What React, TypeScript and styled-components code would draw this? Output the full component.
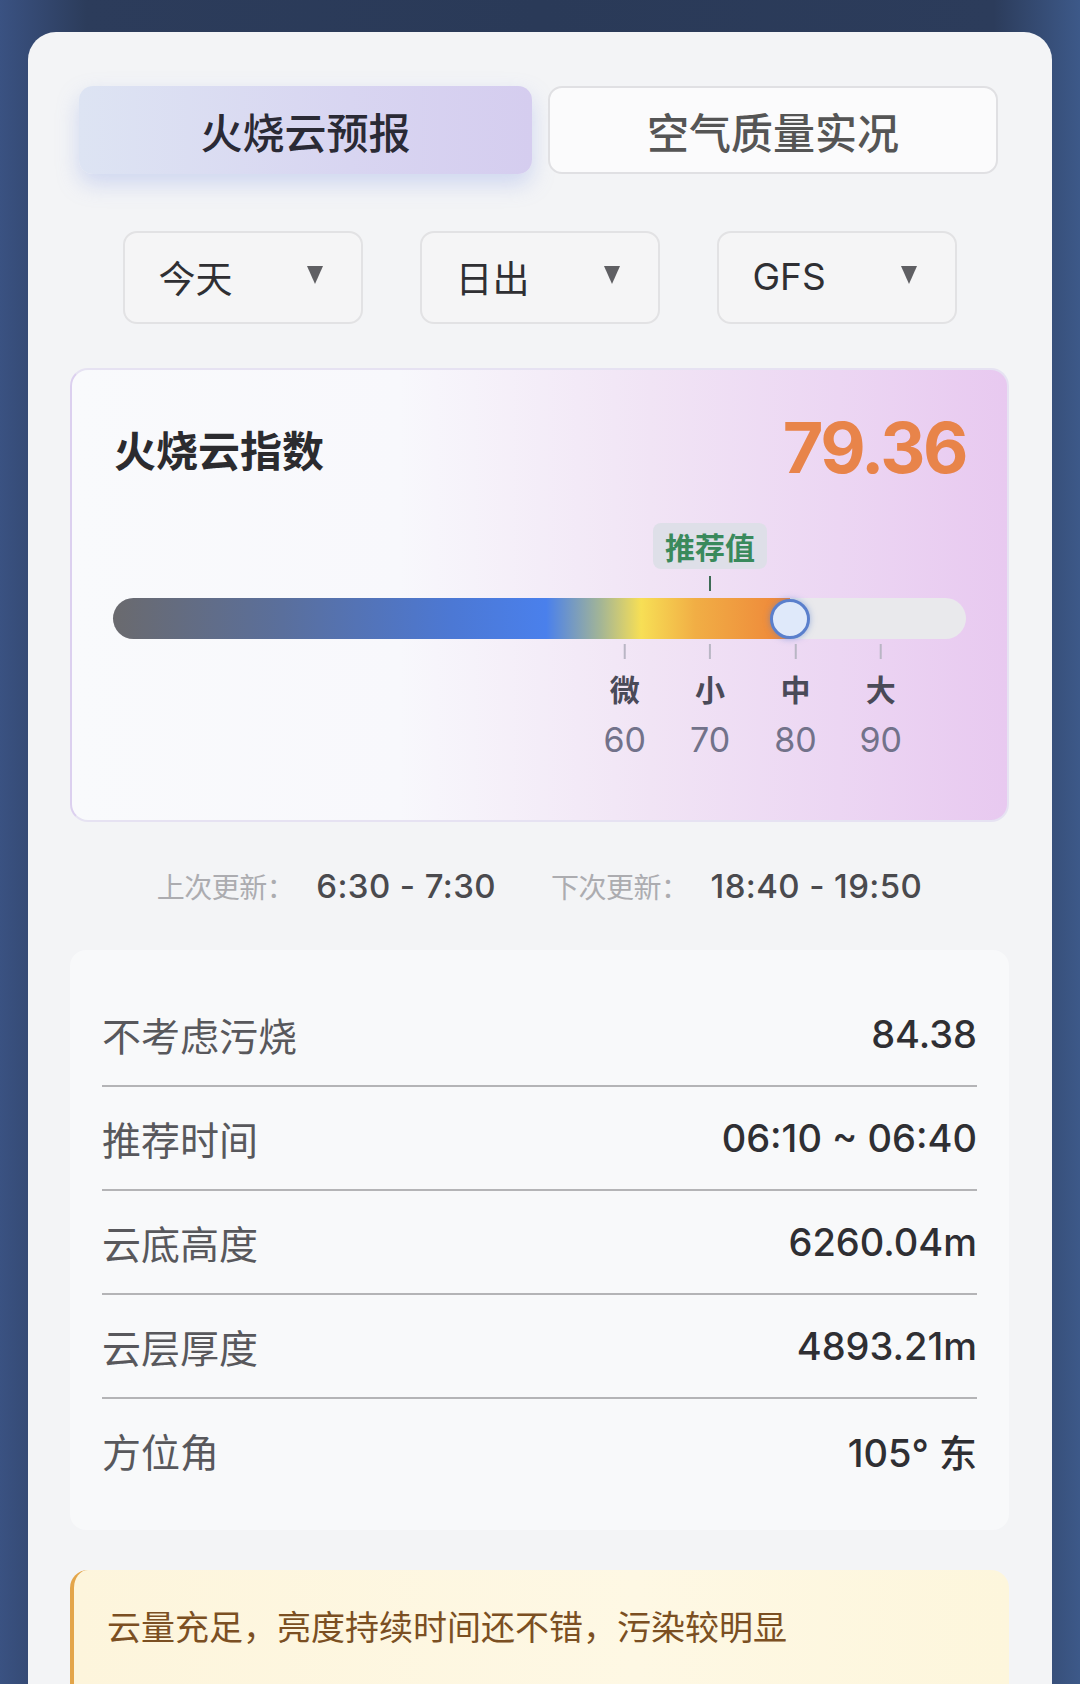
import React from "react";
import styled, { createGlobalStyle } from "styled-components";

const Global = createGlobalStyle`
  html, body { margin: 0; padding: 0; }
  body {
    font-family: "Inter", "Noto Sans CJK SC", "Noto Sans", sans-serif;
    background: #2c3d5c;
  }
`;

const Page = styled.div`
  min-height: 1684px;
  padding: 32px 28px 0;
  box-sizing: border-box;
  background: linear-gradient(90deg, #3a5282 0%, #2c3c5b 8%, #2a3a58 50%, #2c3c5b 92%, #3d5989 100%);
  overflow: hidden;
`;

const Card = styled.div`
  background: #f3f4f6;
  border-radius: 28px 28px 0 0;
  min-height: 1652px;
  padding: 54px 43px 0 42px;
  box-sizing: border-box;
`;

const Tabs = styled.div`
  display: grid;
  grid-template-columns: 453px 450px;
  gap: 16px;
  margin: 0 11px 0 9px;
`;

const Tab = styled.div<{ $active?: boolean }>`
  height: 88px;
  box-sizing: border-box;
  display: flex;
  align-items: center;
  justify-content: center;
  font-family: "Noto Sans CJK SC", sans-serif;
  font-size: 42px;
  font-weight: 500;
  border-radius: 14px;
  color: ${(p) => (p.$active ? "#2a2a35" : "#555")};
  background: ${(p) =>
    p.$active ? "linear-gradient(90deg, #dde4f3 0%, #d8d5f1 60%, #d5cdef 100%)" : "#fbfbfc"};
  border: ${(p) => (p.$active ? "none" : "2px solid #e0e0e3")};
  box-shadow: ${(p) => (p.$active ? "0 10px 22px rgba(140, 160, 230, 0.35)" : "none")};
`;

const Selects = styled.div`
  display: flex;
  justify-content: center;
  gap: 57px;
  margin-top: 57px;
`;

const Select = styled.div`
  width: 240px;
  height: 93px;
  box-sizing: border-box;
  border: 2px solid #e2e2e4;
  border-radius: 14px;
  background: #f5f5f6;
  display: flex;
  align-items: center;
  justify-content: space-between;
  padding: 0 38px 2px 34px;
  font-size: 37px;
  color: #2f2f33;
`;

const Caret = styled.svg`
  width: 16px;
  height: 18px;
  display: block;
  margin-top: -4px;
`;

const IndexCard = styled.div`
  margin-top: 44px;
  height: 454px;
  box-sizing: border-box;
  border-radius: 18px;
  border: 2px solid #e6e2f2;
  border-left-color: #dcd0ef;
  background: linear-gradient(90deg, #f9fafc 0%, #f8f8fc 35%, #f1e4f5 62%, #ecd6f3 82%, #e8c9f0 100%);
  padding: 38px 41px 0 41px;
  display: flex;
  flex-direction: column;
`;

const Header = styled.div`
  height: 80px;
  display: flex;
  align-items: center;
  justify-content: space-between;
`;

const Title = styled.div`
  font-family: "Noto Sans CJK SC", sans-serif;
  font-size: 42px;
  font-weight: 700;
  color: #2b2b2f;
  padding-left: 1px;
`;

const Score = styled.div`
  font-family: "Inter", sans-serif;
  font-size: 70px;
  font-weight: 700;
  color: #e8844a;
  letter-spacing: -2.5px;
  margin-top: -2px;
`;

const Scale = styled.div`
  position: relative;
  width: 853px;
  margin-top: 35px;
`;

const MarkerLayer = styled.div`
  position: relative;
  height: 68px;
`;

const Badge = styled.div`
  position: absolute;
  top: 0;
  transform: translateX(-50%);
  height: 46px;
  padding: 0 12px;
  border-radius: 8px;
  background: #dedfe8;
  color: #3a8a5c;
  font-family: "Noto Sans CJK SC", sans-serif;
  font-size: 30px;
  font-weight: 600;
  display: flex;
  align-items: center;
  white-space: nowrap;
`;

const BadgeTick = styled.div`
  position: absolute;
  top: 53px;
  width: 2px;
  height: 15px;
  background: #3d6b55;
  transform: translateX(-50%);
`;

const Track = styled.div`
  position: relative;
  margin-top: 7px;
  height: 41px;
  border-radius: 21px;
  background: #e9e9ec;
`;

const Fill = styled.div`
  height: 100%;
  border-radius: 21px 0 0 21px;
  background: linear-gradient(
    90deg,
    #6a6a6e 0%,
    #5a6f9c 25%,
    #4c78d4 50%,
    #4a80ec 64%,
    #a3b596 72%,
    #f7df55 78%,
    #f1ae45 86%,
    #ee8439 100%
  );
`;

const Knob = styled.div`
  position: absolute;
  top: 50%;
  width: 34px;
  height: 34px;
  border-radius: 50%;
  background: #dfe9fa;
  border: 3px solid #5a7fcc;
  transform: translate(-50%, -50%);
  box-shadow: 0 0 6px rgba(90, 127, 204, 0.55);
`;

const Levels = styled.div`
  position: relative;
  height: 125px;
`;

const Level = styled.div`
  position: absolute;
  top: 5px;
  transform: translateX(-50%);
  display: flex;
  flex-direction: column;
  align-items: center;
`;

const LevelTick = styled.div`
  width: 2px;
  height: 15px;
  background: #b9b6c4;
`;

const LevelName = styled.div`
  margin-top: 11px;
  font-family: "Noto Sans CJK SC", sans-serif;
  font-size: 30px;
  line-height: 36px;
  font-weight: 700;
  color: #4a4a58;
`;

const LevelNum = styled.div`
  margin-top: 14px;
  font-size: 34px;
  line-height: 40px;
  color: #72728a;
`;

const Updates = styled.div`
  margin-top: 42px;
  height: 44px;
  display: flex;
  align-items: center;
  justify-content: center;
  gap: 55px;
`;

const UpdateItem = styled.div`
  display: flex;
  align-items: center;
  gap: 22px;
`;

const UpdateLabel = styled.span`
  font-family: "Noto Sans CJK SC", sans-serif;
  font-size: 28px;
  color: #acacb0;
  letter-spacing: -0.5px;
`;

const UpdateValue = styled.span`
  font-size: 33px;
  color: #4a4a4e;
  font-weight: 500;
  letter-spacing: 0.4px;
`;

const Details = styled.div`
  margin-top: 42px;
  border-radius: 16px;
  background: #f8f9fa;
  padding: 33px 32px 29px;
`;

const Row = styled.div<{ $last?: boolean }>`
  height: 102px;
  display: flex;
  align-items: center;
  justify-content: space-between;
  border-bottom: ${(p) => (p.$last ? "none" : "2px solid #b4b4b6")};
`;

const RowLabel = styled.span`
  font-family: "Noto Sans CJK SC", sans-serif;
  font-size: 39px;
  color: #58585c;
`;

const RowValue = styled.span`
  font-size: 38px;
  font-weight: 500;
  color: #2f2f33;
  font-family: "Inter", "Noto Sans CJK SC", sans-serif;
`;

const Alert = styled.div`
  margin-top: 40px;
  height: 140px;
  box-sizing: border-box;
  border-radius: 18px;
  border-left: 4px solid #e3a54a;
  background: linear-gradient(90deg, #fdf5dc 0%, #fef8e4 60%, #fdf6dc 100%);
  padding: 32px 33px 0;
  font-family: "Noto Sans CJK SC", sans-serif;
  font-size: 34px;
  line-height: 48px;
  color: #7b4f22;
`;

const levels = [
  { name: "微", v: 60 },
  { name: "小", v: 70 },
  { name: "中", v: 80 },
  { name: "大", v: 90 },
];

const rows = [
  ["不考虑污烧", "84.38"],
  ["推荐时间", "06:10 ~ 06:40"],
  ["云底高度", "6260.04m"],
  ["云层厚度", "4893.21m"],
  ["方位角", "105° 东"],
];

const CaretIcon = () => (
  <Caret viewBox="0 0 16 18">
    <polygon points="0,0 16,0 8,18" fill="#5f5f63" />
  </Caret>
);

export default function App() {
  const score = 79.36;
  return (
    <Page>
      <Global />
      <Card>
        <Tabs>
          <Tab $active>火烧云预报</Tab>
          <Tab>空气质量实况</Tab>
        </Tabs>
        <Selects>
          <Select>
            <span>今天</span>
            <CaretIcon />
          </Select>
          <Select>
            <span>日出</span>
            <CaretIcon />
          </Select>
          <Select>
            <span>GFS</span>
            <CaretIcon />
          </Select>
        </Selects>
        <IndexCard>
          <Header>
            <Title>火烧云指数</Title>
            <Score>{score}</Score>
          </Header>
          <Scale>
            <MarkerLayer>
              <Badge style={{ left: "70%" }}>推荐值</Badge>
              <BadgeTick style={{ left: "70%" }} />
            </MarkerLayer>
            <Track>
              <Fill style={{ width: `${score}%` }} />
              <Knob style={{ left: `${score}%` }} />
            </Track>
            <Levels>
              {levels.map((l) => (
                <Level key={l.v} style={{ left: `${l.v}%` }}>
                  <LevelTick />
                  <LevelName>{l.name}</LevelName>
                  <LevelNum>{l.v}</LevelNum>
                </Level>
              ))}
            </Levels>
          </Scale>
        </IndexCard>
        <Updates>
          <UpdateItem>
            <UpdateLabel>上次更新：</UpdateLabel>
            <UpdateValue>6:30 - 7:30</UpdateValue>
          </UpdateItem>
          <UpdateItem>
            <UpdateLabel>下次更新：</UpdateLabel>
            <UpdateValue>18:40 - 19:50</UpdateValue>
          </UpdateItem>
        </Updates>
        <Details>
          {rows.map(([k, v], i) => (
            <Row key={k} $last={i === rows.length - 1}>
              <RowLabel>{k}</RowLabel>
              <RowValue>{v}</RowValue>
            </Row>
          ))}
        </Details>
        <Alert>云量充足，亮度持续时间还不错，污染较明显</Alert>
      </Card>
    </Page>
  );
}
